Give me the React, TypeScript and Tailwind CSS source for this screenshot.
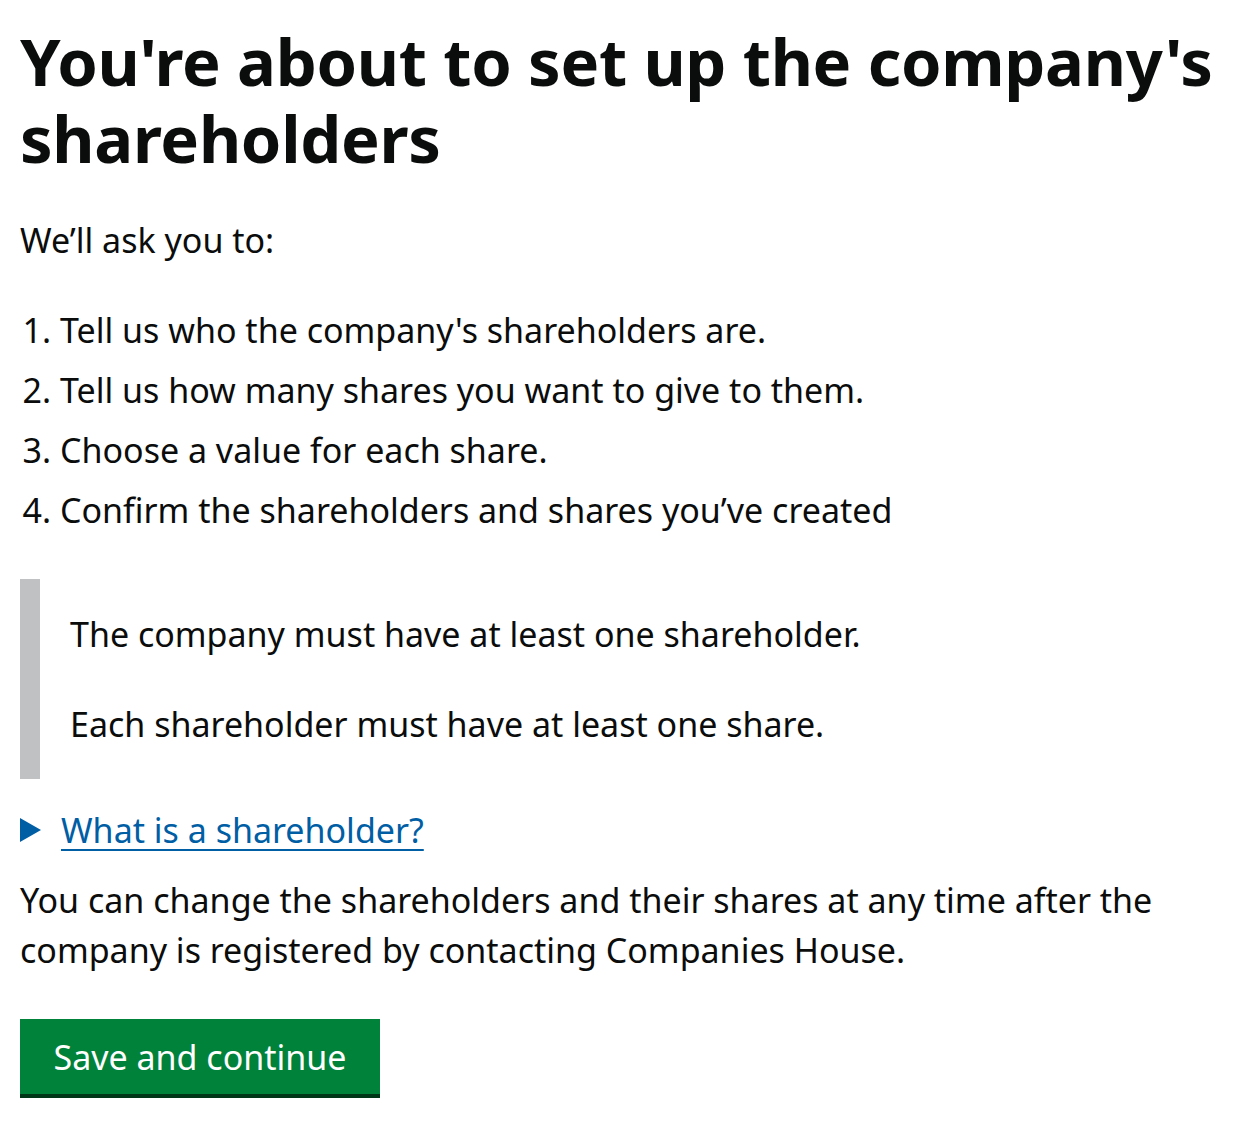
import React from 'react';

const steps = [
  "Tell us who the company's shareholders are.",
  'Tell us how many shares you want to give to them.',
  'Choose a value for each share.',
  'Confirm the shareholders and shares you’ve created',
];

const ShareholderIntro: React.FC = () => {
  return (
    <main className="px-[20px] text-[#0b0c0c] font-['Noto_Sans',sans-serif] text-[34px] leading-[50px]">
      <h1 className="pt-[23px] text-[65px] leading-[77px] font-bold tracking-[-0.3px]">
        You're about to set up the company's shareholders
      </h1>

      <p className="mt-[38px]">We’ll ask you to:</p>

      <ol className="mt-[40px] pl-[40px] list-decimal list-outside flex flex-col gap-[10px]">
        {steps.map((step) => (
          <li key={step}>{step}</li>
        ))}
      </ol>

      <div className="mt-[44px] border-l-[20px] border-[#bfc1c3] pl-[30px] py-[30px] flex flex-col gap-[40px]">
        <p>The company must have at least one shareholder.</p>
        <p>Each shareholder must have at least one share.</p>
      </div>

      <details className="mt-[26px]">
        <summary className="list-none flex items-center gap-[20px] cursor-pointer">
          <svg width="21" height="24" viewBox="0 0 21 24" className="shrink-0">
            <polygon points="0,0 21,12 0,24" fill="#005ea5" />
          </svg>
          <span className="text-[#005ea5] underline underline-offset-[6px] decoration-[2px]">
            What is a shareholder?
          </span>
        </summary>
      </details>

      <p className="mt-[20px]">
        You can change the shareholders and their shares at any time after the company is registered by contacting
        Companies House.
      </p>

      <button className="mt-[44px] mb-[30px] w-[360px] h-[75px] bg-[#00823b] text-white shadow-[0_4px_0_#003618] text-[34px] leading-[50px]">
        Save and continue
      </button>
    </main>
  );
};

export default function App() {
  return <ShareholderIntro />;
}
